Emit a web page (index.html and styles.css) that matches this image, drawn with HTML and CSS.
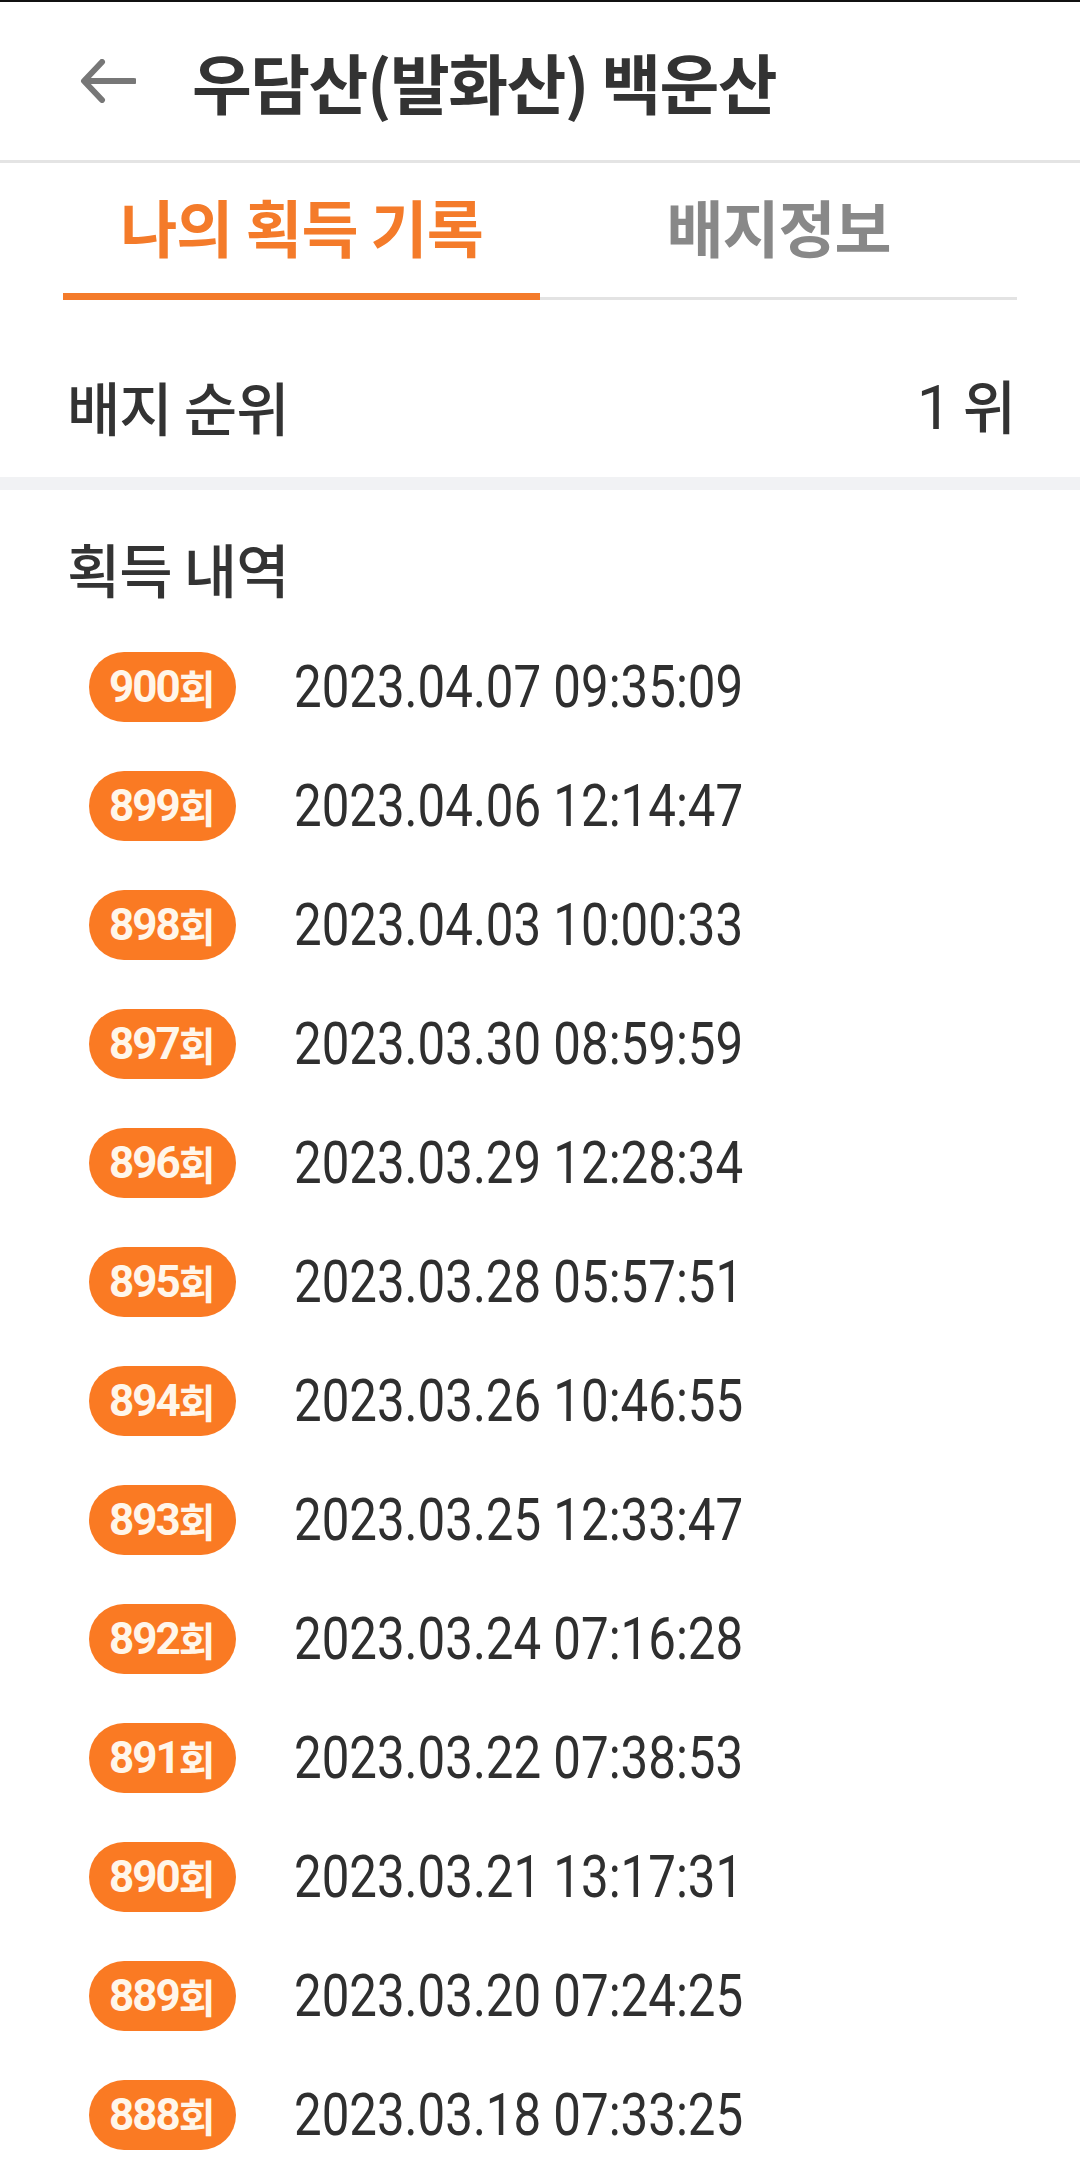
FILE: index.html
```html
<html>
<head>
    <title>우담산(발화산) 백운산</title>
    <link rel="stylesheet" href="styles.css">
</head>
<body>
    <div class="header">
        <svg class="back" width="56" height="44" viewBox="0 0 56 44">
            <path d="M54 22H5M22 3L4 22l18 19" fill="none" stroke="#777" stroke-width="6" stroke-linecap="round" stroke-linejoin="round"/>
        </svg>
        <h1 class="title">우담산(발화산) 백운산</h1>
    </div>

    <div class="tabs">
        <div class="tab active">나의 획득 기록</div>
        <div class="tab">배지정보</div>
    </div>

    <div class="rank">
        <span>배지 순위</span>
        <span class="rank-value"><b>1</b> 위</span>
    </div>

    <div class="band"></div>

    <div class="history">
        <h2 class="history-title">획득 내역</h2>
        <ul class="list">
            <li class="row"><span class="badge">900<em>회</em></span><span class="date">2023.04.07 09:35:09</span></li>
            <li class="row"><span class="badge">899<em>회</em></span><span class="date">2023.04.06 12:14:47</span></li>
            <li class="row"><span class="badge">898<em>회</em></span><span class="date">2023.04.03 10:00:33</span></li>
            <li class="row"><span class="badge">897<em>회</em></span><span class="date">2023.03.30 08:59:59</span></li>
            <li class="row"><span class="badge">896<em>회</em></span><span class="date">2023.03.29 12:28:34</span></li>
            <li class="row"><span class="badge">895<em>회</em></span><span class="date">2023.03.28 05:57:51</span></li>
            <li class="row"><span class="badge">894<em>회</em></span><span class="date">2023.03.26 10:46:55</span></li>
            <li class="row"><span class="badge">893<em>회</em></span><span class="date">2023.03.25 12:33:47</span></li>
            <li class="row"><span class="badge">892<em>회</em></span><span class="date">2023.03.24 07:16:28</span></li>
            <li class="row"><span class="badge">891<em>회</em></span><span class="date">2023.03.22 07:38:53</span></li>
            <li class="row"><span class="badge">890<em>회</em></span><span class="date">2023.03.21 13:17:31</span></li>
            <li class="row"><span class="badge">889<em>회</em></span><span class="date">2023.03.20 07:24:25</span></li>
            <li class="row"><span class="badge">888<em>회</em></span><span class="date">2023.03.18 07:33:25</span></li>
        </ul>
    </div>
</body>
</html>
```

FILE: styles.css
```css
body {
    margin: 0;
    background: #fff;
    color: #333;
    font-family: "Noto Sans CJK KR", "Noto Sans", sans-serif;
    border-top: 2px solid #111;
}
.header {
    height: 158px;
    display: flex;
    align-items: center;
    padding-left: 80px;
    border-bottom: 3px solid #e4e4e4;
}
.title {
    margin: 0 0 0 56px;
    font-size: 65px;
    font-weight: 700;
    letter-spacing: -1.5px;
    line-height: 1;
    color: #333;
}
.tabs {
    display: flex;
    margin: 0 63px;
}
.tab {
    flex: 1;
    box-sizing: border-box;
    height: 137px;
    padding-top: 31px;
    text-align: center;
    font-size: 62px;
    font-weight: 700;
    letter-spacing: -1px;
    line-height: 64px;
    color: #888;
    border-bottom: 7px solid transparent;
    background: linear-gradient(#e3e3e3, #e3e3e3) bottom / 100% 3px no-repeat;
    background-origin: border-box;
}
.tab.active {
    color: #f47b2a;
    border-bottom-color: #f47b2a;
    background: none;
}
.rank {
    display: flex;
    justify-content: space-between;
    align-items: center;
    height: 177px;
    box-sizing: border-box;
    padding: 35px 65px 0 67px;
    font-size: 58px;
    font-weight: 500;
    letter-spacing: -1px;
    line-height: 64px;
}
.rank-value b {
    font-family: "Roboto", sans-serif;
    font-weight: 400;
    font-size: 62px;
}
.band {
    height: 13px;
    background: #f1f2f4;
}
.history {
    padding: 46px 0 0 67px;
}
.history-title {
    margin: 0 0 27px;
    font-size: 58px;
    font-weight: 500;
    letter-spacing: -1px;
    line-height: 64px;
}
.list {
    list-style: none;
    margin: 0;
    padding: 0 0 0 22px;
}
.row {
    height: 119px;
    display: flex;
    align-items: center;
    gap: 58px;
}
.badge {
    height: 70px;
    padding: 0 20px;
    display: flex;
    align-items: center;
    border-radius: 35px;
    background: #fa7a23;
    color: #fff6ea;
    font-family: "Roboto", sans-serif;
    font-weight: 700;
    font-size: 44px;
    letter-spacing: -2px;
}
.badge em {
    font-style: normal;
    font-family: "Noto Sans CJK KR", sans-serif;
    font-size: 40px;
    letter-spacing: 0;
}
.date {
    font-family: "Roboto", sans-serif;
    font-size: 60px;
    color: #2f2f2f;
    transform: scaleX(0.82);
    transform-origin: left center;
}
```
